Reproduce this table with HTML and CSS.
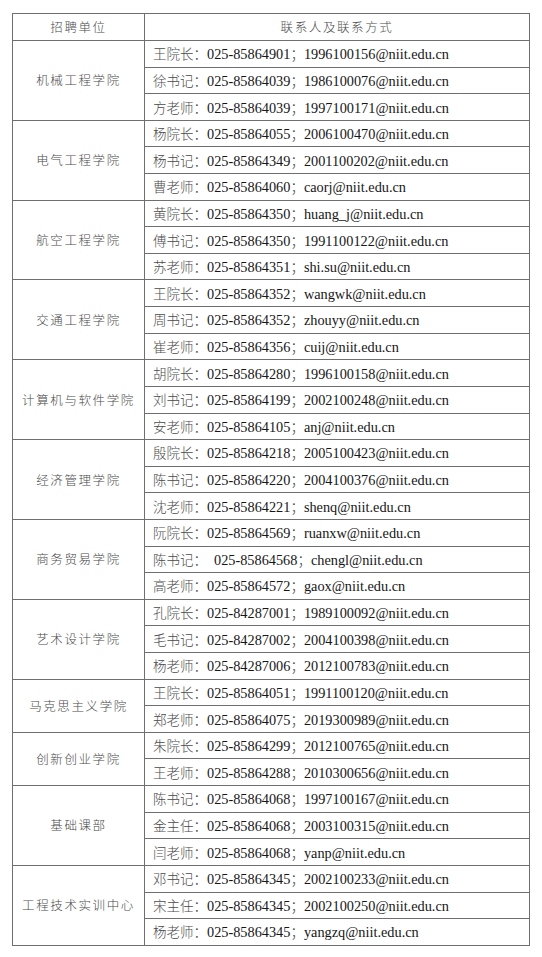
FILE: index.html
```html
<!DOCTYPE html>
<html lang="zh-CN">
<head>
<meta charset="utf-8">
<title>联系方式</title>
<link rel="stylesheet" href="styles.css">
</head>
<body>
<table class="contacts">
  <colgroup><col class="col-unit"><col class="col-contact"></colgroup>
  <thead>
    <tr class="head-row"><th>招聘单位</th><th>联系人及联系方式</th></tr>
  </thead>
  <tbody>
    <tr><td class="unit" rowspan="3">机械工程学院</td><td class="contact"><span class="role">王院长：</span>025-85864901<span class="sep">；</span>1996100156@niit.edu.cn</td></tr>
    <tr><td class="contact"><span class="role">徐书记：</span>025-85864039<span class="sep">；</span>1986100076@niit.edu.cn</td></tr>
    <tr><td class="contact"><span class="role">方老师：</span>025-85864039<span class="sep">；</span>1997100171@niit.edu.cn</td></tr>

    <tr><td class="unit" rowspan="3">电气工程学院</td><td class="contact"><span class="role">杨院长：</span>025-85864055<span class="sep">；</span>2006100470@niit.edu.cn</td></tr>
    <tr><td class="contact"><span class="role">杨书记：</span>025-85864349<span class="sep">；</span>2001100202@niit.edu.cn</td></tr>
    <tr><td class="contact"><span class="role">曹老师：</span>025-85864060<span class="sep">；</span>caorj@niit.edu.cn</td></tr>

    <tr><td class="unit" rowspan="3">航空工程学院</td><td class="contact"><span class="role">黄院长：</span>025-85864350<span class="sep">；</span>huang_j@niit.edu.cn</td></tr>
    <tr><td class="contact"><span class="role">傅书记：</span>025-85864350<span class="sep">；</span>1991100122@niit.edu.cn</td></tr>
    <tr><td class="contact"><span class="role">苏老师：</span>025-85864351<span class="sep">；</span>shi.su@niit.edu.cn</td></tr>

    <tr><td class="unit" rowspan="3">交通工程学院</td><td class="contact"><span class="role">王院长：</span>025-85864352<span class="sep">；</span>wangwk@niit.edu.cn</td></tr>
    <tr><td class="contact"><span class="role">周书记：</span>025-85864352<span class="sep">；</span>zhouyy@niit.edu.cn</td></tr>
    <tr><td class="contact"><span class="role">崔老师：</span>025-85864356<span class="sep">；</span>cuij@niit.edu.cn</td></tr>

    <tr><td class="unit" rowspan="3">计算机与软件学院</td><td class="contact"><span class="role">胡院长：</span>025-85864280<span class="sep">；</span>1996100158@niit.edu.cn</td></tr>
    <tr><td class="contact"><span class="role">刘书记：</span>025-85864199<span class="sep">；</span>2002100248@niit.edu.cn</td></tr>
    <tr><td class="contact"><span class="role">安老师：</span>025-85864105<span class="sep">；</span>anj@niit.edu.cn</td></tr>

    <tr><td class="unit" rowspan="3">经济管理学院</td><td class="contact"><span class="role">殷院长：</span>025-85864218<span class="sep">；</span>2005100423@niit.edu.cn</td></tr>
    <tr><td class="contact"><span class="role">陈书记：</span>025-85864220<span class="sep">；</span>2004100376@niit.edu.cn</td></tr>
    <tr><td class="contact"><span class="role">沈老师：</span>025-85864221<span class="sep">；</span>shenq@niit.edu.cn</td></tr>

    <tr><td class="unit" rowspan="3">商务贸易学院</td><td class="contact"><span class="role">阮院长：</span>025-85864569<span class="sep">；</span>ruanxw@niit.edu.cn</td></tr>
    <tr><td class="contact"><span class="role">陈书记：</span><span class="gap"></span>025-85864568<span class="sep">；</span>chengl@niit.edu.cn</td></tr>
    <tr><td class="contact"><span class="role">高老师：</span>025-85864572<span class="sep">；</span>gaox@niit.edu.cn</td></tr>

    <tr><td class="unit" rowspan="3">艺术设计学院</td><td class="contact"><span class="role">孔院长：</span>025-84287001<span class="sep">；</span>1989100092@niit.edu.cn</td></tr>
    <tr><td class="contact"><span class="role">毛书记：</span>025-84287002<span class="sep">；</span>2004100398@niit.edu.cn</td></tr>
    <tr><td class="contact"><span class="role">杨老师：</span>025-84287006<span class="sep">；</span>2012100783@niit.edu.cn</td></tr>

    <tr><td class="unit" rowspan="2">马克思主义学院</td><td class="contact"><span class="role">王院长：</span>025-85864051<span class="sep">；</span>1991100120@niit.edu.cn</td></tr>
    <tr><td class="contact"><span class="role">郑老师：</span>025-85864075<span class="sep">；</span>2019300989@niit.edu.cn</td></tr>

    <tr><td class="unit" rowspan="2">创新创业学院</td><td class="contact"><span class="role">朱院长：</span>025-85864299<span class="sep">；</span>2012100765@niit.edu.cn</td></tr>
    <tr><td class="contact"><span class="role">王老师：</span>025-85864288<span class="sep">；</span>2010300656@niit.edu.cn</td></tr>

    <tr><td class="unit" rowspan="3">基础课部</td><td class="contact"><span class="role">陈书记：</span>025-85864068<span class="sep">；</span>1997100167@niit.edu.cn</td></tr>
    <tr><td class="contact"><span class="role">金主任：</span>025-85864068<span class="sep">；</span>2003100315@niit.edu.cn</td></tr>
    <tr><td class="contact"><span class="role">闫老师：</span>025-85864068<span class="sep">；</span>yanp@niit.edu.cn</td></tr>

    <tr><td class="unit" rowspan="3">工程技术实训中心</td><td class="contact"><span class="role">邓书记：</span>025-85864345<span class="sep">；</span>2002100233@niit.edu.cn</td></tr>
    <tr><td class="contact"><span class="role">宋主任：</span>025-85864345<span class="sep">；</span>2002100250@niit.edu.cn</td></tr>
    <tr><td class="contact"><span class="role">杨老师：</span>025-85864345<span class="sep">；</span>yangzq@niit.edu.cn</td></tr>
  </tbody>
</table>
</body>
</html>
```

FILE: styles.css
```css
html, body {
  margin: 0;
  padding: 0;
  background: #ffffff;
}

body {
  padding: 13px 0 0 12px;
  font-family: "Liberation Serif", "Noto Sans CJK SC", serif;
  color: #161616;
}

.contacts {
  border-collapse: collapse;
  width: 518px;
  table-layout: fixed;
}

.col-unit {
  width: 132px;
}

.contacts th,
.contacts td {
  border: 1px solid #6f6f6f;
  padding: 0;
  vertical-align: middle;
  line-height: 16px;
}

.head-row {
  height: 27px;
}

.contacts tbody tr {
  height: 26.62px;
}

.contacts th {
  font-family: "Noto Sans CJK SC", sans-serif;
  font-weight: 300;
  font-size: 12.5px;
  letter-spacing: 1.6px;
  color: #4a4a4a;
  text-align: center;
}

.unit {
  font-family: "Noto Sans CJK SC", sans-serif;
  font-weight: 300;
  font-size: 12.5px;
  letter-spacing: 1.6px;
  color: #4a4a4a;
  text-align: center;
}

.contact {
  font-size: 14.3px;
  padding-left: 8px !important;
  white-space: nowrap;
  text-align: left;
}

.role,
.sep {
  font-family: "Noto Sans CJK SC", sans-serif;
  font-weight: 300;
  font-size: 13.5px;
  color: #4a4a4a;
}

.gap {
  display: inline-block;
  width: 7px;
}
```
